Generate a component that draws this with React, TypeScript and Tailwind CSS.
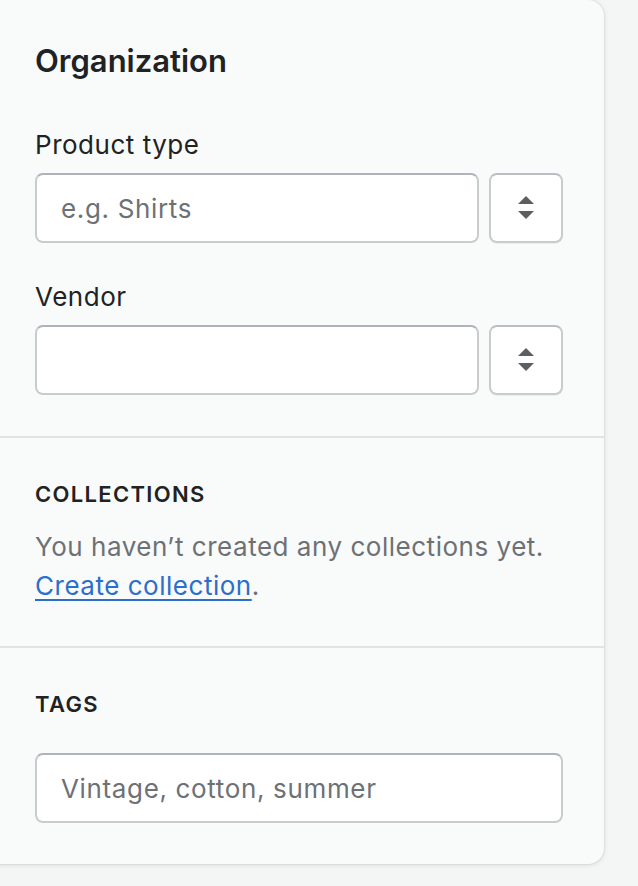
import React from "react";

function Stepper() {
  return (
    <button
      type="button"
      className="flex h-[70px] w-[74px] shrink-0 items-center justify-center rounded-[8px] border-2 border-[#c9cccf] border-t-[#babfc3] bg-white shadow-[0_1px_0_rgba(0,0,0,0.05)]"
    >
      <svg width="18" height="26" viewBox="0 0 18 26" fill="#5c5f62">
        <path d="M9 1 L17 9 L1 9 Z" />
        <path d="M1 16 L17 16 L9 24 Z" />
      </svg>
    </button>
  );
}

function TextInput({ placeholder }: { placeholder?: string }) {
  return (
    <input
      type="text"
      placeholder={placeholder}
      className="h-[70px] w-full min-w-0 rounded-[8px] border-2 border-[#c9cccf] border-t-[#aeb4b9] bg-white px-[24px] text-[26px] tracking-[0.025em] text-[#202223] outline-none placeholder:text-[#6d7175]"
    />
  );
}

export default function App() {
  return (
    <div
      className="min-h-[886px] w-full bg-[#f4f5f5]"
      style={{ fontFamily: "Inter, 'Noto Sans', sans-serif" }}
    >
      <div className="-ml-[6px] w-[610px] rounded-r-[16px] bg-[#f9fafa] shadow-[0_0_0_1px_rgba(63,63,68,0.05),0_1px_5px_0_rgba(63,63,68,0.15)]">
        {/* Organization */}
        <div className="p-[41px]">
          <h2 className="text-[31px] font-semibold leading-[40px] text-[#202223]">
            Organization
          </h2>
          <div className="mt-[46px]">
            <label className="block text-[26px] leading-[36px] tracking-[0.02em] text-[#202223]">
              Product type
            </label>
            <div className="mt-[10px] flex gap-[10px]">
              <TextInput placeholder="e.g. Shirts" />
              <Stepper />
            </div>
          </div>
          <div className="mt-[36px]">
            <label className="block text-[26px] leading-[36px] tracking-[0.02em] text-[#202223]">
              Vendor
            </label>
            <div className="mt-[10px] flex gap-[10px]">
              <TextInput />
              <Stepper />
            </div>
          </div>
        </div>

        <div className="h-[2px] bg-[#e1e3e5]" />

        {/* Collections */}
        <div className="p-[41px]">
          <h3 className="text-[22px] font-semibold uppercase leading-[30px] tracking-[0.06em] text-[#202223]">
            Collections
          </h3>
          <p className="mt-[18px] text-[26px] leading-[39px] tracking-[0.02em] text-[#6d7175]">
            You haven’t created any collections yet.
            <br />
            <a
              href="#"
              className="text-[#2c6ecb] underline decoration-[2px] underline-offset-[4px]"
            >
              Create collection
            </a>
            .
          </p>
        </div>

        <div className="h-[2px] bg-[#e1e3e5]" />

        {/* Tags */}
        <div className="p-[41px]">
          <h3 className="text-[22px] font-semibold uppercase leading-[30px] tracking-[0.06em] text-[#202223]">
            Tags
          </h3>
          <div className="mt-[34px]">
            <TextInput placeholder="Vintage, cotton, summer" />
          </div>
        </div>
      </div>
    </div>
  );
}
